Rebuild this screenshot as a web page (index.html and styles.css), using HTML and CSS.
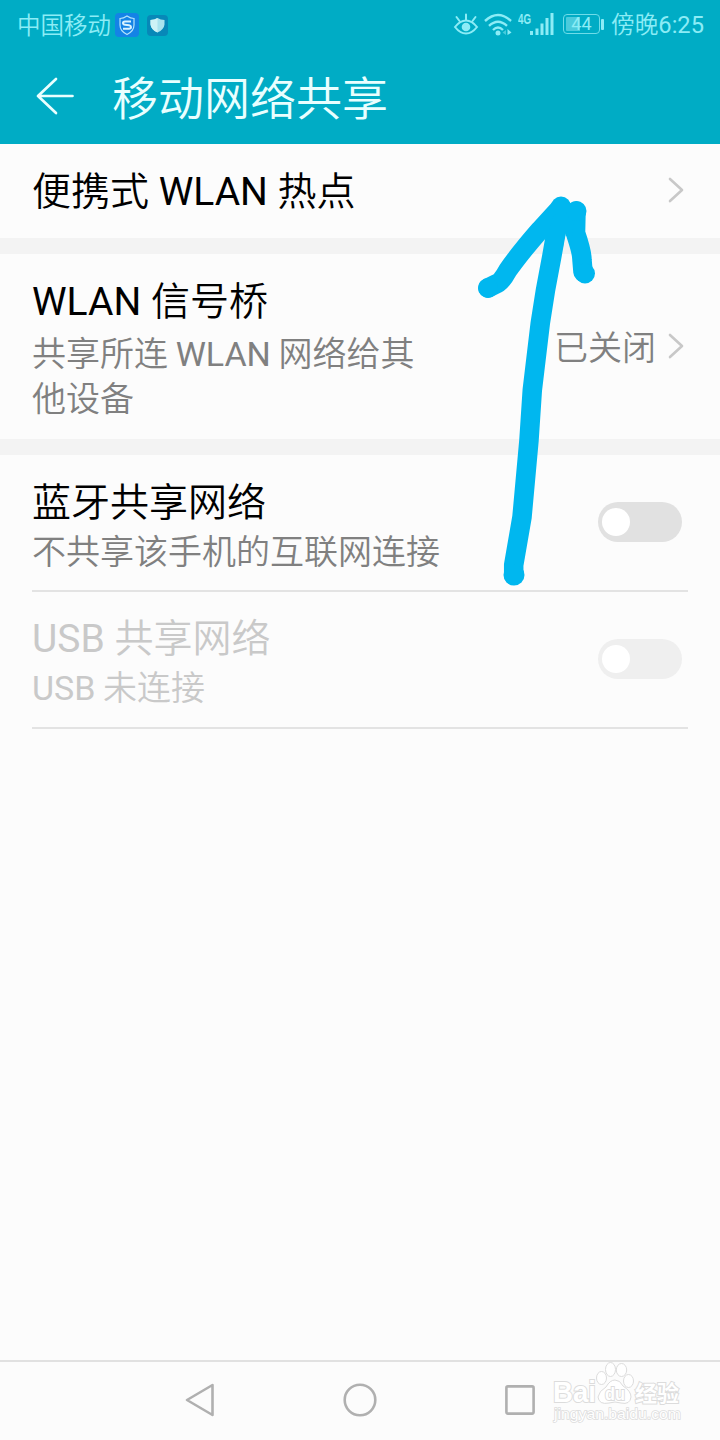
FILE: index.html
```html
<!DOCTYPE html>
<html lang="zh-CN">
<head>
    <meta charset="UTF-8">
    <meta name="viewport" content="width=device-width, initial-scale=1.0">
    <title>移动网络共享</title>
    <link rel="stylesheet" href="styles.css">
</head>
<body>
    <div class="Screen">
        <header class="Top">
            <div class="Status-Bar">
                <div class="Status-Left">
                    <span class="Carrier">中国移动</span>
                    <svg class="App-Icon" width="24" height="24" viewBox="0 0 24 24">
                        <rect width="24" height="24" rx="4" fill="#1483e6"/>
                        <path d="M12 3 Q15.500 5.500 19 5.500 V12 Q19 18 12 21.500 Q5 18 5 12 V5.500 Q8.500 5.500 12 3Z" fill="none" stroke="#b5e3fb" stroke-width="1.200"/>
                        <path d="M16 8.500 H10 Q8 8.700 8 10 Q8 11.500 10 11.700 L14 12.200 Q16 12.600 16 14 Q16 15.800 14 15.800 H8" fill="none" stroke="#d9f3ff" stroke-width="2"/>
                    </svg>
                    <svg class="Guard-Icon" width="21" height="21" viewBox="0 0 21 21">
                        <rect width="21" height="21" rx="4" fill="#0788b8"/>
                        <path d="M10.500 3 Q13.500 5 17.500 5 V9.500 Q17 14.500 10.500 17.500 Q4 14.500 3.500 9.500 V5 Q7.500 5 10.500 3Z" fill="#a9e3ee"/>
                        <path d="M10.500 3 Q7.500 5 3.500 5 V9.500 Q4 14.500 10.500 17.500Z" fill="#cdf2f6"/>
                    </svg>
                </div>
                <div class="Status-Right">
                    <svg class="Eye" width="26" height="24" viewBox="0 0 26 24">
                        <g fill="none" stroke="#8cecf6" stroke-width="2" stroke-linecap="round">
                            <path d="M2 14 Q7 7.500 13 7.500 T24 14 Q19 20.500 13 20.500 T2 14Z"/>
                            <path d="M13 7 V1.500 M6.500 8 L3.500 4 M19.500 8 L22.500 4"/>
                        </g>
                        <circle cx="13" cy="14" r="4.300" fill="#8cecf6"/>
                    </svg>
                    <svg class="Wifi" width="28" height="24" viewBox="0 0 28 24">
                        <g fill="none" stroke="#8cecf6" stroke-width="2.400">
                            <path d="M1 8 Q14 -4 27 8"/>
                            <path d="M5 12.800 Q14 4.500 23 12.800"/>
                            <path d="M9 17 Q14 12.200 19 17"/>
                        </g>
                        <circle cx="14" cy="20" r="2.500" fill="#8cecf6"/>
                        <path d="M22 17 V22 L18.500 19.500Z" fill="#46cbdc"/>
                        <path d="M23.500 16 V22 L27.500 19.500Z" fill="#8cecf6"/>
                    </svg>
                    <span class="Net-Type">4G</span>
                    <svg class="Signal" width="24" height="23" viewBox="0 0 24 23">
                        <path d="M1.500 22 V18 M7 22 V15.500 M12 22 V10.500 M17 22 V5 M22 22 V0" stroke="#8cecf6" stroke-width="3"/>
                    </svg>
                    <div class="Battery"><span>44</span></div>
                    <span class="Battery-Tip"></span>
                    <span class="Clock">傍晚6:25</span>
                </div>
            </div>
            <div class="Title-Bar">
                <svg width="38" height="38" viewBox="0 0 38 38">
                    <path d="M36.500 19 H2 M20 2 L2 19 L20 36" fill="none" stroke="#e9ffff" stroke-width="2.700" stroke-linecap="round" stroke-linejoin="round"/>
                </svg>
                <h1>移动网络共享</h1>
            </div>
        </header>

        <main class="Settings">
            <div class="Row Hotspot">
                <div class="Row-Text">
                    <h2>便携式 WLAN 热点</h2>
                </div>
                <svg class="Chevron" width="16" height="26" viewBox="0 0 16 26">
                    <path d="M2 2 L14 13 L2 24"/>
                </svg>
            </div>
            <div class="Row Bridge">
                <div class="Row-Text">
                    <h2>WLAN 信号桥</h2>
                    <p>共享所连 WLAN 网络给其他设备</p>
                </div>
                <span class="State">已关闭</span>
                <svg class="Chevron" width="16" height="26" viewBox="0 0 16 26">
                    <path d="M2 2 L14 13 L2 24"/>
                </svg>
            </div>
            <div class="Group">
                <div class="Row Switch-Row">
                    <div class="Row-Text">
                        <h2>蓝牙共享网络</h2>
                        <p>不共享该手机的互联网连接</p>
                    </div>
                    <span class="Toggle"></span>
                </div>
                <div class="Row Switch-Row Disabled">
                    <div class="Row-Text">
                        <h2>USB 共享网络</h2>
                        <p>USB 未连接</p>
                    </div>
                    <span class="Toggle"></span>
                </div>
            </div>
        </main>

        <nav class="Nav-Bar">
            <svg width="32" height="36" viewBox="0 0 32 36">
                <path d="M28.500 3 V33 L3 18Z"/>
            </svg>
            <svg width="36" height="36" viewBox="0 0 36 36">
                <circle cx="18" cy="18" r="15.300"/>
            </svg>
            <svg width="32" height="32" viewBox="0 0 32 32">
                <rect x="2.400" y="2.400" width="27.200" height="27.200" rx="1.500"/>
            </svg>
        </nav>

        <svg class="Watermark" width="140" height="66" viewBox="0 0 140 66">
            <text x="2" y="43" font-size="29" textLength="43" lengthAdjust="spacingAndGlyphs">Bai</text>
            <text x="84" y="42" font-size="22" textLength="44">经验</text>
            <g>
                <ellipse cx="50.500" cy="19" rx="5" ry="6.500"/>
                <ellipse cx="59.500" cy="10.500" rx="5" ry="7"/>
                <ellipse cx="70.500" cy="11" rx="5.200" ry="6.500"/>
                <ellipse cx="77.500" cy="22" rx="5" ry="6.500"/>
                <path d="M64 21 Q69 21 72 27 Q80 32 80 38 Q79 46 70 44 Q64 42 58 44 Q48 46 47 38 Q48 32 55 28 Q59 21 64 21Z"/>
            </g>
            <text class="Mark-Du" x="54" y="41" font-size="19" textLength="20" lengthAdjust="spacingAndGlyphs">du</text>
            <text class="Mark-Url" x="3" y="60" font-size="15" textLength="127" lengthAdjust="spacingAndGlyphs">jingyan.baidu.com</text>
        </svg>

        <!-- hand drawn arrow over the list -->
        <svg class="Arrow" width="130" height="400" viewBox="470 190 130 400">
            <path d="M513.700 575 L513.700 565 L517.500 543 L522 517 L529 440 L532.300 390 L540.300 323 L545.500 290 L551.700 257 L554.700 240 L561 208"/>
            <path d="M561 207 L540 230 Q520 253 508 270 Q501 283 496 284 L488 288"/>
            <path d="M576 211 L575.500 233 Q582 252 582 260 L583 272"/>
            <path class="Fill" d="M558 200 L576 206 L572 236 L565.800 236 L565.500 228 L563 247 L548 235Z"/>
            <circle cx="514" cy="575" r="10.500"/>
            <circle cx="561" cy="206.500" r="10"/>
            <circle cx="488" cy="288" r="10"/>
            <circle cx="576.500" cy="211" r="10"/>
            <circle cx="585" cy="273.500" r="10"/>
        </svg>
    </div>
</body>
</html>
```
FILE: styles.css
```css
*{
    box-sizing: border-box;
    padding: 0;
    margin: 0;
    font-family: Roboto, "Noto Sans CJK SC DemiLight", "Noto Sans CJK SC", sans-serif;
}
.Screen{
    position: relative;
    width: 720px;
    height: 1440px;
    background-color: #fcfcfc;
    display: flex;
    flex-direction: column;
    overflow: hidden;
}
svg{
    display: block;
    flex-shrink: 0;
}

/* status + title */
.Top{
    height: 144px;
    background-color: #00acc5;
}
.Status-Bar{
    height: 50px;
    padding: 0 16px 0 17px;
    display: flex;
    align-items: center;
    justify-content: space-between;
    color: #8cecf6;
}
.Status-Left, .Status-Right{
    display: flex;
    align-items: center;
}
.Carrier{
    font-size: 23.500px;
    line-height: 48px;
    padding-top: 2px;
}
.App-Icon{
    margin-left: 4px;
}
.Guard-Icon{
    margin-left: 8px;
}
.Wifi{
    margin-left: 5px;
}
.Net-Type{
    font-family: "Liberation Sans", sans-serif;
    font-size: 14px;
    font-weight: bold;
    line-height: 14px;
    width: 15px;
    margin-left: 6px;
    padding-bottom: 13px;
    transform: scaleX(0.700);
    transform-origin: left;
}
.Signal{
    margin-left: -3px;
    margin-bottom: 2px;
}
.Battery{
    width: 37px;
    height: 20px;
    margin-left: 9px;
    margin-bottom: 2px;
    border: 1.500px solid #6fdce9;
    border-radius: 4px;
    background: linear-gradient(to right, #4bcbdc 46%, transparent 46%) content-box;
    padding: 2px;
    display: flex;
    align-items: center;
    justify-content: center;
}
.Battery span{
    font-size: 18px;
    line-height: 18px;
}
.Battery-Tip{
    width: 3px;
    height: 11px;
    margin-left: 1px;
    margin-bottom: 2px;
    border-radius: 1px;
    background-color: #8cecf6;
}
.Clock{
    margin-left: 7px;
    padding-top: 1px;
    font-size: 23.700px;
    line-height: 49px;
}
.Title-Bar{
    height: 94px;
    padding: 0 36px 2px;
    display: flex;
    align-items: center;
    gap: 38px;
}
.Title-Bar h1{
    font-size: 46px;
    font-weight: 400;
    line-height: 80px;
    padding-top: 5px;
    color: #e9ffff;
}

/* list */
.Settings{
    flex: 1;
}
.Row{
    display: flex;
    padding: 0 36px 0 32px;
    align-items: center;
}
.Row-Text{
    flex: 1;
    padding-top: 9px;
}
.Row h2{
    font-size: 39px;
    font-weight: 400;
    line-height: 46px;
    color: #000;
}
.Row p{
    font-size: 34px;
    line-height: 45px;
    font-weight: 400;
    word-spacing: -0.800px;
    color: #808080;
}
.Hotspot{
    height: 94px;
}
.Hotspot .Row-Text{
    padding-top: 2px;
}
.Bridge{
    height: 217px;
    border-top: 16px solid #f3f3f3;
    border-bottom: 16px solid #f3f3f3;
}
.Bridge .Row-Text{
    padding-top: 7px;
}
.Bridge .Row-Text p{
    width: 400px;
    margin-top: 7px;
}
.State{
    font-size: 34px;
    color: #808080;
    margin-right: 12px;
    margin-bottom: 2px;
}
.Chevron{
    margin-bottom: 2px;
}
.Chevron path{
    fill: none;
    stroke: #c8c8c8;
    stroke-width: 2.600;
    stroke-linecap: round;
    stroke-linejoin: round;
}
.Group{
    padding: 0 32px;
}
.Switch-Row{
    height: 137px;
    padding: 0 6px 0 0;
    border-bottom: 2px solid #e3e3e3;
}
.Switch-Row p{
    margin-top: 4px;
}
.Disabled .Row-Text{
    padding-top: 8px;
}
.Disabled h2, .Disabled p{
    color: #c9c9c9;
}
.Toggle{
    width: 84px;
    height: 40px;
    margin-bottom: 2px;
    padding: 6px 4px;
    border-radius: 20px;
    background-color: #e1e1e1;
}
.Toggle::before{
    content: "";
    display: block;
    width: 28px;
    height: 28px;
    border-radius: 50%;
    background-color: #fff;
}
.Disabled .Toggle{
    background-color: #efefef;
}

/* bottom keys */
.Nav-Bar{
    height: 80px;
    border-top: 2px solid #e1e1e1;
    padding: 0 184px 2px;
    display: flex;
    align-items: center;
    justify-content: space-between;
}
.Nav-Bar svg{
    fill: none;
    stroke: #b0b0b0;
    stroke-width: 2.600;
    stroke-linejoin: round;
}
.Watermark{
    position: absolute;
    left: 551px;
    top: 1359px;
    fill: #fff;
    stroke: #dcdcdc;
    stroke-width: 1;
}
.Watermark text{
    font-family: "Liberation Sans", "Noto Sans CJK SC", sans-serif;
    font-weight: bold;
    stroke-width: 2;
    paint-order: stroke;
}
.Watermark .Mark-Url{
    font-weight: 400;
    stroke-width: 1.500;
}
.Arrow{
    position: absolute;
    left: 470px;
    top: 190px;
    fill: #00b7ef;
}
.Arrow path{
    fill: none;
    stroke: #00b7ef;
    stroke-width: 19.500;
    stroke-linecap: round;
    stroke-linejoin: round;
}
.Arrow .Fill{
    fill: #00b7ef;
    stroke: none;
}
```
